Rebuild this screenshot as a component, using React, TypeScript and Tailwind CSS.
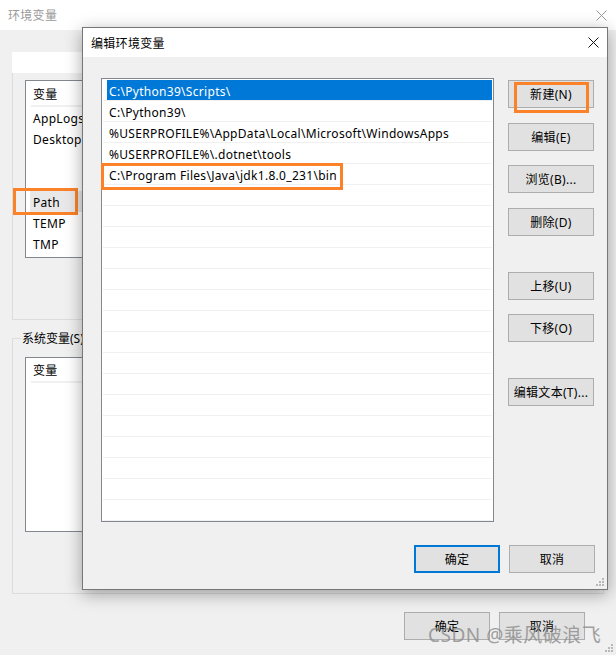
import React from "react";

const paths = [
  "C:\\Python39\\Scripts\\",
  "C:\\Python39\\",
  "%USERPROFILE%\\AppData\\Local\\Microsoft\\WindowsApps",
  "%USERPROFILE%\\.dotnet\\tools",
  "C:\\Program Files\\Java\\jdk1.8.0_231\\bin",
];

const rightButtons = [
  { label: "新建(N)", mt: "mt-0" },
  { label: "编辑(E)", mt: "mt-[15px]" },
  { label: "浏览(B)...", mt: "mt-[14px]" },
  { label: "删除(D)", mt: "mt-[15px]" },
  { label: "上移(U)", mt: "mt-[36px]" },
  { label: "下移(O)", mt: "mt-[14px]" },
  { label: "编辑文本(T)...", mt: "mt-[36px]" },
];

function CloseIcon({ color }: { color: string }) {
  return (
    <svg width="11" height="11" viewBox="0 0 11 11">
      <path d="M0.5 0.5L10.5 10.5M10.5 0.5L0.5 10.5" stroke={color} strokeWidth="1" />
    </svg>
  );
}

function Grip() {
  return (
    <svg width="9" height="9" viewBox="0 0 9 9">
      {[
        [7, 1],
        [4, 4],
        [7, 4],
        [1, 7],
        [4, 7],
        [7, 7],
      ].map(([x, y]) => (
        <rect key={`${x}-${y}`} x={x - 1} y={y - 1} width="2" height="2" fill="#b8b8b8" />
      ))}
    </svg>
  );
}

function WinButton({ label, focused, className = "" }: { label: string; focused?: boolean; className?: string }) {
  return (
    <div
      className={`flex items-center justify-center w-[86px] h-[28px] pt-px bg-[#e1e1e1] ${
        focused ? "border-2 border-[#0078d7]" : "border border-[#adadad]"
      } ${className}`}
    >
      {label}
    </div>
  );
}

export default function App() {
  return (
    <div className="relative w-[616px] h-[655px] overflow-hidden bg-[#f0f0f0] text-[12px] leading-none tracking-[0.3px] text-black font-['Microsoft_YaHei_UI','Noto_Sans','Noto_Sans_CJK_SC',sans-serif]">
      {/* background window: 环境变量 */}
      <div className="h-[30px] bg-white flex items-center justify-between pl-[8px] pr-[9px]">
        <span className="text-[#999] pt-px">环境变量</span>
        <CloseIcon color="#999" />
      </div>
      <div className="px-[12px]">
        {/* user variables group */}
        <div className="relative mt-[32px] h-[258px] border border-[#dcdcdc]">
          <div className="absolute -left-px -top-[11px] w-[80px] h-[21px] bg-white" />
          <div className="ml-[12px] mt-[17px] w-[300px] h-[178px] border border-[#828790] bg-white">
            <div className="mx-[5px] h-[26px] flex items-center pl-[2px] pt-[3px] border-b-2 border-[#f0f0f0]">变量</div>
            {["AppLogs", "Desktop", "", "", "Path", "TEMP", "TMP"].map((name, i) => (
              <div key={i} className="h-[21px] flex items-center">
                <div
                  className={`ml-[4px] h-[21px] flex-1 flex items-center pl-[3px] pt-[2px] ${
                    name === "Path" ? "bg-[#e8e8e8]" : ""
                  }`}
                >
                  {name}
                </div>
              </div>
            ))}
          </div>
        </div>

        {/* system variables group */}
        <div className="relative mt-[18px] h-[256px] border border-[#dcdcdc]">
          <span className="absolute left-[8px] -top-[9px] px-px bg-[#f0f0f0] leading-[18px] tracking-normal">系统变量(S)</span>
          <div className="ml-[12px] mt-[18px] w-[300px] h-[175px] border border-[#828790] bg-white">
            <div className="mx-[5px] h-[25px] flex items-center pl-[2px] pt-[2px] border-b-2 border-[#f0f0f0]">变量</div>
          </div>
        </div>

        <div className="flex justify-end gap-[9px] pr-[19px] mt-[18px]">
          <WinButton label="确定" />
          <WinButton label="取消" />
        </div>
      </div>
      <div className="absolute right-[2px] bottom-[2px]">
        <Grip />
      </div>

      {/* annotation on Path */}
      <div className="absolute left-[13px] top-[188px] w-[65px] h-[27px] border-[3px] border-[#fb8229]" />

      {/* front dialog: 编辑环境变量 */}
      <div className="absolute left-[82px] top-[27px] w-[526px] h-[563px] border border-[#777] bg-[#f0f0f0] flex flex-col shadow-[0_4px_16px_rgba(0,0,0,0.35)]">
        <div className="h-[29px] bg-white flex items-center justify-between pl-[8px] pr-[8px]">
          <span className="pt-[2px]">编辑环境变量</span>
          <CloseIcon color="#111" />
        </div>
        <div className="relative flex-1 pl-[18px] pt-[21px]">
          <div className="flex">
            <div className="relative w-[393px] h-[444px] border border-[#828790] bg-white p-px">
              {Array.from({ length: 21 }).map((_, i) => (
                <div key={i} className="h-[21px] border-b border-[#f0f0f0] flex">
                  {i === 0 ? (
                    <div className="ml-[4px] flex-1 h-[20px] bg-[#0078d7] text-white flex items-center pl-[2px] pt-[3px]">
                      {paths[0]}
                    </div>
                  ) : (
                    <div className="flex-1 h-[20px] flex items-center pl-[6px] pt-[3px]">{paths[i] ?? ""}</div>
                  )}
                </div>
              ))}
              {/* annotation on jdk row */}
              <div className="absolute -left-px top-[84px] w-[242px] h-[27px] border-[3px] border-[#fb8229]" />
            </div>
            <div className="ml-[14px] pt-[2px] flex flex-col">
              {rightButtons.map((b) => (
                <WinButton key={b.label} label={b.label} className={b.mt} />
              ))}
            </div>
          </div>
          <div className="flex justify-end gap-[9px] pr-[12px] mt-[23px]">
            <WinButton label="确定" focused />
            <WinButton label="取消" />
          </div>
          <div className="absolute right-[2px] bottom-[2px]">
            <Grip />
          </div>
        </div>
      </div>

      {/* annotation on 新建 */}
      <div className="absolute left-[514px] top-[82px] w-[75px] h-[31px] border-[3px] border-[#fb8229]" />

      {/* watermark */}
      <div className="absolute left-[428px] top-[624px] text-[19px] leading-[22px] tracking-[0.5px] text-[#8c8c8c] opacity-80 font-['Noto_Sans','Noto_Sans_CJK_SC',sans-serif]">
        CSDN @乘风破浪飞
      </div>
    </div>
  );
}
